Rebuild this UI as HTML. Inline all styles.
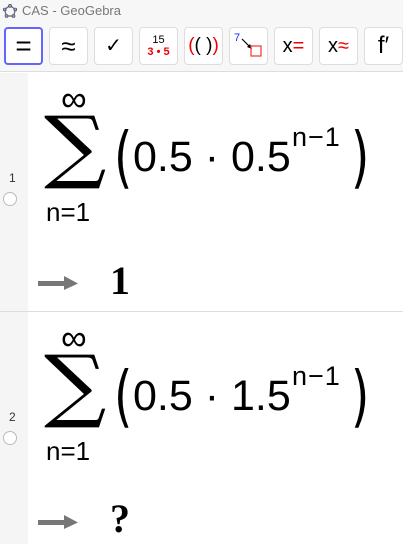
<!DOCTYPE html>
<html><head><meta charset="utf-8">
<style>
*{margin:0;padding:0;box-sizing:border-box}
body{width:403px;height:544px;overflow:hidden;background:#fff;font-family:"Liberation Sans",sans-serif;position:relative}
.title{position:absolute;left:0;top:0;width:403px;height:22px;background:#f7f7f7;color:#777;font-size:13px}
.title span{position:absolute;left:22px;top:3px}
.tb{position:absolute;top:22px;left:0;width:403px;height:50px;background:#f7f7f7;border-bottom:1px solid #ddd}
.btn{position:absolute;top:5px;width:39px;height:38px;background:#fff;border:1px solid #ddd;border-radius:4px;text-align:center;font-size:20px;line-height:36px}
.gut{position:absolute;left:0;top:73px;width:28px;height:471px;background:#f5f5f5}
.sep{position:absolute;left:0;width:403px;height:1px;background:#ddd}
.a{position:absolute;white-space:nowrap}
.num{font-size:12px;color:#333}
.circ{width:14px;height:14px;border:1px solid #bbb;border-radius:50%;background:#fff}
.sum{font-family:"DejaVu Serif",serif;font-size:76px;line-height:1;transform-origin:0 0;transform:scale(1.15,1.05)}
.inf{font-family:"DejaVu Sans",sans-serif;font-weight:200;font-size:36px;line-height:1}
.low{font-size:26px;line-height:1}
.expr{font-size:43px;line-height:1}
.par{font-family:"DejaVu Sans",sans-serif;font-size:67px;line-height:1;transform-origin:0 0;transform:scaleX(.7)}
.sup{font-size:27px;line-height:1;letter-spacing:1px}
.arrow{width:40px;height:14px}
.res{font-family:"Liberation Serif",serif;font-weight:bold;font-size:40px;line-height:1}
</style></head><body>
<div class="title"><svg style="position:absolute;left:3px;top:4px" width="14" height="14" viewBox="0 0 14 14"><polygon points="7,1.5 12.5,5.5 10.5,12 3.5,12 1.5,5.5" fill="none" stroke="#666" stroke-width="1.2"/><g fill="#99f" stroke="#333" stroke-width=".6"><circle cx="7" cy="1.8" r="1.5"/><circle cx="12.3" cy="5.5" r="1.5"/><circle cx="10.5" cy="12" r="1.5"/><circle cx="3.5" cy="12" r="1.5"/><circle cx="1.7" cy="5.5" r="1.5"/></g></svg><span>CAS - GeoGebra</span></div>
<div class="tb">
<div class="btn" style="left:4px;border:2px solid #6464ff;line-height:34px;font-size:28px">=</div>
<div class="btn" style="left:49px;font-size:26px">≈</div>
<div class="btn" style="left:94px;font-size:20px">✓</div>
<div class="btn" style="left:139px;font-size:11px;line-height:12px;padding-top:6px">15<br><span style="color:#e00;font-weight:bold">3 • 5</span></div>
<div class="btn" style="left:184px;font-size:19px;color:#e00">(<span style="color:#000">( )</span>)</div>
<div class="btn" style="left:229px"><svg width="37" height="36" viewBox="0 0 37 36"><text x="4" y="13" font-size="11" fill="#22f" font-family="Liberation Sans">7</text><line x1="12" y1="11" x2="20" y2="19" stroke="#000" stroke-width="1.2"/><polygon points="22,21 17,19 20,16" fill="#000"/><rect x="21" y="18" width="10" height="10" fill="none" stroke="#e33" stroke-width="1.2"/></svg></div>
<div class="btn" style="left:274px;font-size:20px">x<span style="color:#e00">=</span></div>
<div class="btn" style="left:319px;font-size:20px">x<span style="color:#e00">≈</span></div>
<div class="btn" style="left:364px;font-size:24px">f′</div>
</div>
<div class="gut"></div>
<div class="sep" style="top:311px"></div>

<div class="a num" style="left:9px;top:171px">1</div>
<div class="a circ" style="left:3px;top:192px"></div>
<div class="a inf" style="left:61px;top:82px">∞</div>
<div class="a sum" style="left:44px;top:106px">∑</div>
<div class="a low" style="left:46px;top:199px">n=1</div>
<div class="a par" style="left:114px;top:124px">(</div>
<div class="a expr" style="left:133px;top:136px">0.5 · 0.5</div>
<div class="a sup" style="left:292px;top:124px">n−1</div>
<div class="a par" style="left:351px;top:124px">)</div>
<svg class="a arrow" style="left:38px;top:276px" viewBox="0 0 40 14"><rect x="0" y="5" width="28" height="5" fill="#777"/><polygon points="26,0 40,7.5 26,14" fill="#777"/></svg>
<div class="a res" style="left:110px;top:261px">1</div>

<div class="a num" style="left:9px;top:410px">2</div>
<div class="a circ" style="left:3px;top:431px"></div>
<div class="a inf" style="left:61px;top:321px">∞</div>
<div class="a sum" style="left:44px;top:345px">∑</div>
<div class="a low" style="left:46px;top:438px">n=1</div>
<div class="a par" style="left:114px;top:363px">(</div>
<div class="a expr" style="left:133px;top:375px">0.5 · 1.5</div>
<div class="a sup" style="left:292px;top:363px">n−1</div>
<div class="a par" style="left:351px;top:363px">)</div>
<svg class="a arrow" style="left:38px;top:515px" viewBox="0 0 40 14"><rect x="0" y="5" width="28" height="5" fill="#777"/><polygon points="26,0 40,7.5 26,14" fill="#777"/></svg>
<div class="a res" style="left:110px;top:499px">?</div>
</body></html>
